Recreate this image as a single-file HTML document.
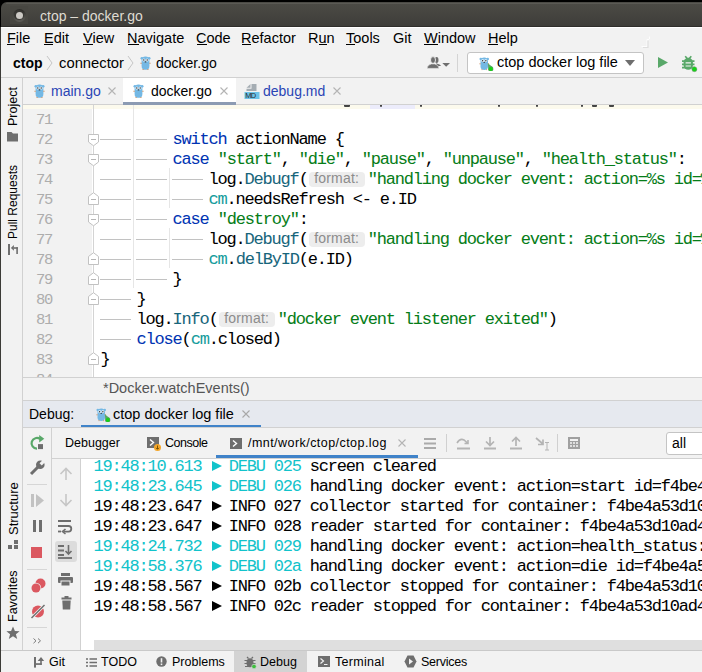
<!DOCTYPE html>
<html><head><meta charset="utf-8">
<style>
*{margin:0;padding:0;box-sizing:border-box;font-style:normal}
html,body{width:702px;height:672px;overflow:hidden;background:#f2f2f2}
body{position:relative;font-family:"Liberation Sans",sans-serif;color:#000}
.a{position:absolute}
.t{position:absolute;white-space:pre;line-height:1}
.m{position:absolute;white-space:pre;font-family:"Liberation Mono",monospace;font-size:17px;letter-spacing:-1.2px;margin-left:0.6px;line-height:20px;height:20px;-webkit-text-stroke:0.05px currentColor}
.vt{position:absolute;white-space:pre;line-height:1;transform-origin:0 0;transform:rotate(-90deg)}
svg{position:absolute;overflow:visible}
.k{color:#0033b3}.s{color:#067d17}.f{color:#17657b}.r{color:#139b9b}
.ws{display:inline-block;position:relative;width:36px;height:20px;vertical-align:top}
.ws:before{content:"";position:absolute;left:-0.6px;top:9px;width:31px;height:1px;background:#c2c2c2}
.hint{display:inline-block;position:relative;width:60px;height:20px;vertical-align:top}
.hint b{position:absolute;left:1.5px;top:1.5px;width:56px;height:15px;border-radius:4px;background:#ededed;font-weight:normal;font-family:"Liberation Sans",sans-serif;font-size:14px;line-height:13px;-webkit-text-stroke:0;color:#8c8c8c;padding-left:5px;letter-spacing:0.2px}

</style></head><body>
<style>.tri{display:inline-block;width:9px;height:20px;vertical-align:top;position:relative}
.tri:before{content:"";position:absolute;left:1px;top:4px;border-left:10px solid;border-left-color:inherit;border-top:5px solid transparent;border-bottom:5px solid transparent}
</style>

<svg width="0" height="0" style="position:absolute">
<defs>
<symbol id="gopher" viewBox="0 0 11 14">
<circle cx="1.9" cy="2.3" r="1.4" fill="#74b8e4"/><circle cx="9.1" cy="2.3" r="1.4" fill="#74b8e4"/>
<rect x="1.6" y="0.6" width="7.8" height="13.2" rx="3.9" fill="#74b8e4"/>
<circle cx="3.9" cy="4.1" r="1.5" fill="#eef6fc"/><circle cx="7.1" cy="4.1" r="1.5" fill="#eef6fc"/>
<circle cx="3.8" cy="4.1" r="0.75" fill="#333"/><circle cx="7.2" cy="4.1" r="0.75" fill="#333"/>
<ellipse cx="5.5" cy="5.9" rx="0.9" ry="0.6" fill="#444"/>
<rect x="0.5" y="6.7" width="1.2" height="1.2" fill="#d09a70"/><rect x="9.3" y="6.7" width="1.2" height="1.2" fill="#d09a70"/>
<rect x="2.5" y="13" width="1.2" height="1" fill="#d09a70"/><rect x="7.3" y="13" width="1.2" height="1" fill="#d09a70"/>
</symbol>
<symbol id="gdot" viewBox="0 0 16 16">
<use href="#gopher" x="0" y="1.5" width="10.5" height="14"/>
<path d="M8.8 8.2 L14.2 12.6 L9.4 15.6Z" fill="#59a869"/>
<circle cx="11.8" cy="14" r="2.4" fill="#14d414" stroke="#8a7a9a" stroke-width="0.4"/>
</symbol>
</defs></svg>

<!-- title bar -->
<div class="a" style="left:0;top:0;width:702px;height:28px;background:#000"></div>
<div class="a" style="left:1px;top:2px;width:701px;height:25px;background:linear-gradient(#4b4a45,#4b4a45 8%,#403f3b 85%,#3d3c38);border-radius:6px 0 0 0"></div><div class="a" style="left:6px;top:3px;width:696px;height:1px;background:#5a5954"></div>
<div class="a" style="left:1px;top:26px;width:701px;height:1px;background:#2f2e2b"></div>
<div class="a" style="left:10px;top:6px;width:18px;height:18px;background:#474641"></div><div class="a" style="left:12.8px;top:8.9px;width:13px;height:13px;border-radius:50%;background:linear-gradient(#2c2b28,#5e5d58)"></div><div class="a" style="left:14.3px;top:10.2px;width:10px;height:10px;border-radius:50%;background:#383733"></div>
<div class="a" style="left:15.8px;top:11.9px;width:7px;height:7px;border-radius:50%;background:#cdcac5"></div>
<div class="t" style="left:40px;top:9px;font-size:14px;color:#dfdbd2">ctop – docker.go</div>

<!-- window left border -->
<div class="a" style="left:0;top:27px;width:1px;height:645px;background:#3c3b37"></div>

<!-- menu bar -->
<div class="a" style="left:1px;top:27px;width:701px;height:1px;background:#ffffff"></div>
<div class="t" style="left:7px;top:31px;font-size:14.5px">File</div>
<div class="t" style="left:44px;top:31px;font-size:14.5px">Edit</div>
<div class="t" style="left:83px;top:31px;font-size:14.5px">View</div>
<div class="t" style="left:127px;top:31px;font-size:14.5px">Navigate</div>
<div class="t" style="left:196px;top:31px;font-size:14.5px">Code</div>
<div class="t" style="left:241px;top:31px;font-size:14.5px">Refactor</div>
<div class="t" style="left:308px;top:31px;font-size:14.5px">Run</div>
<div class="t" style="left:346px;top:31px;font-size:14.5px">Tools</div>
<div class="t" style="left:393px;top:31px;font-size:14.5px">Git</div>
<div class="t" style="left:424px;top:31px;font-size:14.5px">Window</div>
<div class="t" style="left:488px;top:31px;font-size:14.5px">Help</div>
<!-- underlines -->
<div class="a" style="left:7px;top:44px;width:8px;height:1px;background:#000"></div>
<div class="a" style="left:44px;top:44px;width:9px;height:1px;background:#000"></div>
<div class="a" style="left:83px;top:44px;width:10px;height:1px;background:#000"></div>
<div class="a" style="left:128px;top:44px;width:11px;height:1px;background:#000"></div>
<div class="a" style="left:197px;top:44px;width:10px;height:1px;background:#000"></div>
<div class="a" style="left:242px;top:44px;width:9px;height:1px;background:#000"></div>
<div class="a" style="left:319px;top:44px;width:8px;height:1px;background:#000"></div>
<div class="a" style="left:346px;top:44px;width:9px;height:1px;background:#000"></div>
<div class="a" style="left:424px;top:44px;width:14px;height:1px;background:#000"></div>
<div class="a" style="left:488px;top:44px;width:10px;height:1px;background:#000"></div>
<!-- small artifact near menubar right -->
<svg style="left:640px;top:35px" width="12" height="14"><path d="M9.5 4 V1.5 M7 4.5 H9 M7 4.5 V11.5 H1.5" fill="none" stroke="#fdfdfd" stroke-width="1"/><path d="M8 5.5 V12.5 H3" fill="none" stroke="#dedede" stroke-width="1.2"/></svg>

<!-- nav bar -->
<div class="t" style="left:13px;top:56px;font-size:14px;font-weight:bold">ctop</div>
<svg style="left:46px;top:55px" width="8" height="20"><path d="M1 1 L6 8 L1 15" fill="none" stroke="#c6c6c6" stroke-width="1"/></svg>
<div class="t" style="left:59px;top:56px;font-size:14.8px">connector</div>
<svg style="left:127px;top:55px" width="8" height="20"><path d="M1 1 L6 8 L1 15" fill="none" stroke="#c6c6c6" stroke-width="1"/></svg>
<svg style="left:139.5px;top:56px" width="11" height="14"><use href="#gopher" width="11" height="14"/></svg>
<div class="t" style="left:156px;top:56px;font-size:14px">docker.go</div>

<svg style="left:426px;top:56px" width="26" height="16"><ellipse cx="10.6" cy="3.9" rx="1.9" ry="3" fill="#6e6e6e"/><path d="M10 7.2 L13.5 8.6 Q15 9.3 14.8 10 L11 10Z" fill="#6e6e6e"/><ellipse cx="7" cy="4" rx="2.5" ry="3.4" fill="#6e6e6e" stroke="#f2f2f2" stroke-width="0.9"/><path d="M1 12.4 Q1.3 8.8 5.3 7.9 H8.7 Q12.7 8.8 13 12.4Z" fill="#6e6e6e" stroke="#f2f2f2" stroke-width="0.6"/><path d="M16.3 7 H24 L20.15 10.8Z" fill="#6e6e6e"/></svg>
<div class="a" style="left:457px;top:54px;width:1px;height:18px;background:#d4d4d4"></div>
<div class="a" style="left:467px;top:52px;width:177px;height:22px;background:#fff;border:1px solid #c4c4c4;border-radius:3px"></div>
<svg style="left:479px;top:55px" width="16" height="16"><use href="#gdot" width="16" height="16"/></svg>
<div class="t" style="left:497px;top:55px;font-size:14.5px">ctop docker log file</div>
<svg style="left:625px;top:60px" width="10" height="7"><path d="M0 0 L10 0 L5 6Z" fill="#6e6e6e"/></svg>
<svg style="left:658px;top:57px" width="11" height="12"><path d="M0 0 L10 5.5 L0 11Z" fill="#59a869"/></svg>
<svg style="left:681px;top:55px" width="18" height="18"><path d="M4.2 1.2 L6.2 3.6 M10.3 1.2 L8.3 3.6" stroke="#59a869" stroke-width="1.6"/><rect x="2.6" y="2.8" width="9.3" height="12" rx="4.6" fill="#59a869"/><path d="M1 6.2 H13.5 M1 9.4 H13.5 M1 12.6 H13.5" stroke="#59a869" stroke-width="1.7"/><path d="M4.6 7.8 H9.9 M4.6 11 H9.9" stroke="#f2f2f2" stroke-width="1.2"/><circle cx="13.4" cy="14.2" r="2.5" fill="#14d414" stroke="#8a8a8a" stroke-width="0.5"/></svg>

<!-- nav bar border -->
<div class="a" style="left:1px;top:77px;width:701px;height:1px;background:#d1d1d1"></div>


<div class="a" style="left:22px;top:78px;width:1px;height:573px;background:#d1d1d1"></div>

<!-- left strip labels -->
<div class="vt" style="left:7px;top:126px;font-size:12.5px">Project</div>
<svg style="left:7px;top:132px" width="12" height="10"><path d="M0 0 H4.5 L6 1.5 H11 V9.5 H0Z" fill="#6e6e6e"/></svg>
<div class="vt" style="left:7px;top:239px;font-size:12px">Pull Requests</div>
<svg style="left:8px;top:244px" width="11" height="11"><rect x="0" y="0" width="2" height="11" fill="#6e6e6e"/><path d="M2.9 3.9 L5.9 1 L5.9 6.8Z" fill="#6e6e6e"/><rect x="5.8" y="3.2" width="4.1" height="1.6" fill="#6e6e6e"/><rect x="8.3" y="3.2" width="1.6" height="6.8" fill="#6e6e6e"/></svg>
<div class="vt" style="left:7px;top:535px;font-size:13px">Structure</div>
<svg style="left:8px;top:540px" width="11" height="10"><rect x="0" y="5" width="4" height="4" fill="#6e6e6e"/><rect x="6" y="5" width="4" height="4" fill="#6e6e6e"/><rect x="6" y="0" width="4" height="4" fill="#6e6e6e"/></svg>
<div class="vt" style="left:7px;top:622px;font-size:12.5px">Favorites</div>
<svg style="left:6px;top:626px" width="14" height="14"><path d="M7 0.5 L8.9 5 L13.6 5.2 L9.9 8.2 L11.2 13 L7 10.3 L2.8 13 L4.1 8.2 L0.4 5.2 L5.1 5Z" fill="#6e6e6e"/></svg>

<!-- tabs -->
<div class="a" style="left:123px;top:78px;width:113px;height:26px;background:#fff"></div>
<div class="a" style="left:23px;top:104px;width:679px;height:1px;background:#d1d1d1"></div>
<div class="a" style="left:123px;top:102px;width:113px;height:3px;background:#8c9bb3"></div>
<svg style="left:34px;top:84px" width="11" height="14"><use href="#gopher" width="11" height="14"/></svg>
<div class="t" style="left:51px;top:83.5px;font-size:14px;color:#2a45b5">main.go</div>
<svg style="left:108px;top:87px" width="8" height="8"><path d="M0.5 0.5 L7.5 7.5 M7.5 0.5 L0.5 7.5" stroke="#b4b4b4" stroke-width="1.1"/></svg>
<svg style="left:133px;top:84px" width="11" height="14"><use href="#gopher" width="11" height="14"/></svg>
<div class="t" style="left:151px;top:83.5px;font-size:14px;color:#000">docker.go</div>
<svg style="left:220px;top:87px" width="8" height="8"><path d="M0.5 0.5 L7.5 7.5 M7.5 0.5 L0.5 7.5" stroke="#b4b4b4" stroke-width="1.1"/></svg>
<svg style="left:243.5px;top:84px" width="16" height="15"><path d="M2.5 3.8 L6.5 0 V3.8Z" fill="#a5adb3"/><path d="M7.5 0 H12.5 V7 H2.5 V4.8 H7.5Z" fill="#a5adb3"/><rect x="0.5" y="8" width="15" height="7" fill="#6cc3e8"/><text x="1.2" y="14.3" font-family="Liberation Sans" font-size="7.5" fill="#2b2b2b" textLength="11">MD</text></svg>
<div class="t" style="left:263px;top:83.5px;font-size:14px;color:#2a45b5">debug.md</div>
<svg style="left:333px;top:87px" width="8" height="8"><path d="M0.5 0.5 L7.5 7.5 M7.5 0.5 L0.5 7.5" stroke="#b4b4b4" stroke-width="1.1"/></svg>

<div class="a" style="left:92px;top:105px;width:610px;height:272px;background:#fff"></div>
<div class="a" style="left:23px;top:105px;width:679px;height:4px;background:#fcfaed"></div>
<div class="a" style="left:370px;top:105px;width:45px;height:4px;background:#ececfb"></div>
<div class="a" style="left:93px;top:105px;width:1px;height:272px;background:#d4d4d4"></div>
<div class="a" style="left:344px;top:105px;width:6px;height:2px;background:#444;border-radius:0 0 1px 1px"></div>
<div class="a" style="left:380px;top:105px;width:2px;height:2px;background:#444;border-radius:0 0 1px 1px"></div>
<div class="a" style="left:420px;top:105px;width:2px;height:1.5px;background:#444;border-radius:0 0 1px 1px"></div>
<div class="a" style="left:498px;top:105px;width:2px;height:1.5px;background:#444;border-radius:0 0 1px 1px"></div>
<div class="a" style="left:536px;top:105px;width:2px;height:1.5px;background:#444;border-radius:0 0 1px 1px"></div>
<div class="a" style="left:581px;top:105px;width:2px;height:1.5px;background:#444;border-radius:0 0 1px 1px"></div>
<div class="a" style="left:592px;top:105px;width:5px;height:2px;background:#444;border-radius:0 0 1px 1px"></div>
<div class="a" style="left:609px;top:105px;width:5px;height:2px;background:#444;border-radius:0 0 1px 1px"></div>
<div class="a" style="left:133px;top:105px;width:1px;height:183px;background:#e6e6e6"></div>
<div class="a" style="left:169px;top:168px;width:1px;height:40px;background:#e6e6e6"></div>
<div class="a" style="left:169px;top:228px;width:1px;height:40px;background:#e6e6e6"></div>
<div class="m" style="left:35.5px;top:110px;color:#adadad;-webkit-text-stroke:0;font-size:15.5px;letter-spacing:-1.4px">71</div>
<div class="m" style="left:100px;top:110px"></div>
<div class="m" style="left:35.5px;top:130px;color:#adadad;-webkit-text-stroke:0;font-size:15.5px;letter-spacing:-1.4px">72</div>
<div class="m" style="left:100px;top:130px"><i class="ws"></i><i class="ws"></i><span class="k">switch</span> actionName {</div>
<div class="m" style="left:35.5px;top:150px;color:#adadad;-webkit-text-stroke:0;font-size:15.5px;letter-spacing:-1.4px">73</div>
<div class="m" style="left:100px;top:150px"><i class="ws"></i><i class="ws"></i><span class="k">case</span> <span class="s">"start"</span>, <span class="s">"die"</span>, <span class="s">"pause"</span>, <span class="s">"unpause"</span>, <span class="s">"health_status"</span>:</div>
<div class="m" style="left:35.5px;top:170px;color:#adadad;-webkit-text-stroke:0;font-size:15.5px;letter-spacing:-1.4px">74</div>
<div class="m" style="left:100px;top:170px"><i class="ws"></i><i class="ws"></i><i class="ws"></i>log.<span class="f">Debugf</span>(<i class="hint"><b>format:</b></i><span class="s">"handling docker event: action=%s id=%s"</span>, e.Status, e.ID)</div>
<div class="m" style="left:35.5px;top:190px;color:#adadad;-webkit-text-stroke:0;font-size:15.5px;letter-spacing:-1.4px">75</div>
<div class="m" style="left:100px;top:190px"><i class="ws"></i><i class="ws"></i><i class="ws"></i><span class="r">cm</span>.needsRefresh &lt;- e.ID</div>
<div class="m" style="left:35.5px;top:210px;color:#adadad;-webkit-text-stroke:0;font-size:15.5px;letter-spacing:-1.4px">76</div>
<div class="m" style="left:100px;top:210px"><i class="ws"></i><i class="ws"></i><span class="k">case</span> <span class="s">"destroy"</span>:</div>
<div class="m" style="left:35.5px;top:230px;color:#adadad;-webkit-text-stroke:0;font-size:15.5px;letter-spacing:-1.4px">77</div>
<div class="m" style="left:100px;top:230px"><i class="ws"></i><i class="ws"></i><i class="ws"></i>log.<span class="f">Debugf</span>(<i class="hint"><b>format:</b></i><span class="s">"handling docker event: action=%s id=%s"</span>, e.Status, e.ID)</div>
<div class="m" style="left:35.5px;top:250px;color:#adadad;-webkit-text-stroke:0;font-size:15.5px;letter-spacing:-1.4px">78</div>
<div class="m" style="left:100px;top:250px"><i class="ws"></i><i class="ws"></i><i class="ws"></i><span class="r">cm</span>.<span class="f">delByID</span>(e.ID)</div>
<div class="m" style="left:35.5px;top:270px;color:#adadad;-webkit-text-stroke:0;font-size:15.5px;letter-spacing:-1.4px">79</div>
<div class="m" style="left:100px;top:270px"><i class="ws"></i><i class="ws"></i>}</div>
<div class="m" style="left:35.5px;top:290px;color:#adadad;-webkit-text-stroke:0;font-size:15.5px;letter-spacing:-1.4px">80</div>
<div class="m" style="left:100px;top:290px"><i class="ws"></i>}</div>
<div class="m" style="left:35.5px;top:310px;color:#adadad;-webkit-text-stroke:0;font-size:15.5px;letter-spacing:-1.4px">81</div>
<div class="m" style="left:100px;top:310px"><i class="ws"></i>log.<span class="f">Info</span>(<i class="hint"><b>format:</b></i><span class="s">"docker event listener exited"</span>)</div>
<div class="m" style="left:35.5px;top:330px;color:#adadad;-webkit-text-stroke:0;font-size:15.5px;letter-spacing:-1.4px">82</div>
<div class="m" style="left:100px;top:330px"><i class="ws"></i><span class="k">close</span>(<span class="r">cm</span>.closed)</div>
<div class="m" style="left:35.5px;top:350px;color:#adadad;-webkit-text-stroke:0;font-size:15.5px;letter-spacing:-1.4px">83</div>
<div class="m" style="left:100px;top:350px">}</div>
<div class="m" style="left:35.5px;top:370px;color:#adadad;-webkit-text-stroke:0;font-size:15.5px;letter-spacing:-1.4px">84</div>
<svg style="left:0;top:0" width="702" height="672"><path d="M88.5 134.5 H98.5 V142.0 L93.5 145.8 L88.5 142.0 Z" fill="#fff" stroke="#c2c2c2" stroke-width="1"/><path d="M91 139.5 H96" stroke="#b5b5b5" stroke-width="1"/><path d="M88.5 154.5 H98.5 V162.0 L93.5 165.8 L88.5 162.0 Z" fill="#fff" stroke="#c2c2c2" stroke-width="1"/><path d="M91 159.5 H96" stroke="#b5b5b5" stroke-width="1"/><path d="M88.5 204.5 H98.5 V196.5 L93.5 192.7 L88.5 196.5 Z" fill="#fff" stroke="#c2c2c2" stroke-width="1"/><path d="M91 199.5 H96" stroke="#b5b5b5" stroke-width="1"/><path d="M88.5 214.5 H98.5 V222.0 L93.5 225.8 L88.5 222.0 Z" fill="#fff" stroke="#c2c2c2" stroke-width="1"/><path d="M91 219.5 H96" stroke="#b5b5b5" stroke-width="1"/><path d="M88.5 264.5 H98.5 V256.5 L93.5 252.7 L88.5 256.5 Z" fill="#fff" stroke="#c2c2c2" stroke-width="1"/><path d="M91 259.5 H96" stroke="#b5b5b5" stroke-width="1"/><path d="M88.5 284.5 H98.5 V276.5 L93.5 272.7 L88.5 276.5 Z" fill="#fff" stroke="#c2c2c2" stroke-width="1"/><path d="M91 279.5 H96" stroke="#b5b5b5" stroke-width="1"/><path d="M88.5 304.5 H98.5 V296.5 L93.5 292.7 L88.5 296.5 Z" fill="#fff" stroke="#c2c2c2" stroke-width="1"/><path d="M91 299.5 H96" stroke="#b5b5b5" stroke-width="1"/><path d="M88.5 364.5 H98.5 V356.5 L93.5 352.7 L88.5 356.5 Z" fill="#fff" stroke="#c2c2c2" stroke-width="1"/><path d="M91 359.5 H96" stroke="#b5b5b5" stroke-width="1"/></svg>
<div class="a" style="left:23px;top:377px;width:679px;height:1px;background:#d1d1d1"></div>
<div class="a" style="left:23px;top:378px;width:679px;height:22px;background:#f2f2f2"></div>
<div class="t" style="left:103px;top:381px;font-size:14.5px;color:#555">*Docker.watchEvents()</div>
<div class="a" style="left:23px;top:400px;width:679px;height:1px;background:#d1d1d1"></div>
<!-- debug header -->
<div class="a" style="left:23px;top:401px;width:679px;height:27px;background:#e6e9ef"></div>
<div class="t" style="left:29px;top:407px;font-size:14px">Debug:</div>
<svg style="left:96px;top:405.5px" width="16" height="16"><use href="#gdot" width="16" height="16"/></svg>
<div class="t" style="left:113px;top:406.5px;font-size:14.5px">ctop docker log file</div>
<svg style="left:242px;top:410px" width="8" height="8"><path d="M0.5 0.5 L7.5 7.5 M7.5 0.5 L0.5 7.5" stroke="#a8a8a8" stroke-width="1.1"/></svg>
<div class="a" style="left:81px;top:425px;width:180px;height:3px;background:#4083c9"></div>
<div class="a" style="left:23px;top:427px;width:679px;height:1px;background:#d1d1d1"></div>

<!-- debug tabs toolbar -->
<div class="t" style="left:65px;top:437px;font-size:12.5px">Debugger</div>
<svg style="left:147px;top:437px" width="14" height="14"><rect x="0" y="0" width="12" height="11" fill="#6e6e6e"/><path d="M3 2.5 L6.5 5.5 L3 8.5" fill="none" stroke="#fff" stroke-width="1.4"/><circle cx="10.5" cy="10.5" r="3.5" fill="#f4a62a"/><path d="M10.5 8.5 V12 M9 10.8 L10.5 12.3 L12 10.8" fill="none" stroke="#6b4a00" stroke-width="0.9"/></svg>
<div class="t" style="left:165px;top:437px;font-size:12.5px;letter-spacing:-0.5px">Console</div>
<svg style="left:230px;top:438px" width="12" height="11"><rect x="0" y="0" width="12" height="11" fill="#6e6e6e"/><path d="M3 2.5 L6.5 5.5 L3 8.5" fill="none" stroke="#fff" stroke-width="1.4"/></svg>
<div class="t" style="left:248px;top:437px;font-size:12.5px;letter-spacing:0.45px">/mnt/work/ctop/ctop.log</div>
<svg style="left:398px;top:439px" width="8" height="8"><path d="M0.5 0.5 L7.5 7.5 M7.5 0.5 L0.5 7.5" stroke="#b4b4b4" stroke-width="1.1"/></svg>
<div class="a" style="left:216px;top:455px;width:202px;height:3px;background:#4083c9"></div>
<svg style="left:424px;top:438px" width="12" height="11"><path d="M0 1 H12 M0 5.5 H12 M0 10 H12" stroke="#aaa" stroke-width="2"/></svg>
<div class="a" style="left:446px;top:434px;width:1px;height:18px;background:#d0d0d0"></div>
<svg style="left:456px;top:437px" width="15" height="13"><path d="M1 6 Q4 1 8 3 L12 6.5 M12 3 V6.5 H8.5" fill="none" stroke="#b4b4b4" stroke-width="1.6"/><path d="M1 11.5 H14" stroke="#b4b4b4" stroke-width="2"/></svg>
<svg style="left:483px;top:437px" width="14" height="13"><path d="M7 0 V8 M3 4.5 L7 8.5 L11 4.5" fill="none" stroke="#b4b4b4" stroke-width="1.7"/><path d="M1 11.5 H13" stroke="#b4b4b4" stroke-width="2"/></svg>
<svg style="left:509px;top:437px" width="14" height="13"><path d="M7 9 V1 M3 4.5 L7 0.5 L11 4.5" fill="none" stroke="#b4b4b4" stroke-width="1.7"/><path d="M1 11.5 H13" stroke="#b4b4b4" stroke-width="2"/></svg>
<svg style="left:535px;top:437px" width="15" height="14"><path d="M1 1 L8 7 M8 2.5 V7.5 H3" fill="none" stroke="#b4b4b4" stroke-width="1.7"/><path d="M10 5.5 H14 M12 5.5 V13 M10 13 H14" fill="none" stroke="#b4b4b4" stroke-width="1"/></svg>
<div class="a" style="left:557px;top:434px;width:1px;height:18px;background:#d0d0d0"></div>
<svg style="left:568px;top:437px" width="13" height="13"><rect x="0" y="0" width="12" height="12" fill="#a0a0a0"/><rect x="2" y="2" width="8" height="2" fill="#f2f2f2"/><path d="M2 6 H4 M5 6 H7 M8 6 H10 M2 9 H4 M5 9 H7 M8 9 H10" stroke="#f2f2f2" stroke-width="1.5"/></svg>
<div class="a" style="left:666px;top:432px;width:50px;height:23px;background:#fff;border:1px solid #c4c4c4;border-radius:3px"></div>
<div class="t" style="left:672px;top:436px;font-size:14px">all</div>
<div class="a" style="left:52px;top:458px;width:650px;height:1px;background:#d1d1d1"></div>

<!-- left debug toolbar -->
<div class="a" style="left:51px;top:428px;width:1px;height:223px;background:#d1d1d1"></div>
<svg style="left:26px;top:432px" width="24" height="48"><path d="M14.2 7.2 A5.3 5.3 0 1 0 11 16.6" fill="none" stroke="#59a869" stroke-width="2.2"/><path d="M18.3 6.8 L13.2 2.9 L13.2 10.6Z" fill="#59a869"/><rect x="12" y="12.1" width="5" height="5" fill="#6e6e6e"/></svg>
<svg style="left:26px;top:432px" width="24" height="48"><path d="M5 42 L12.5 34.5" stroke="#6e6e6e" stroke-width="3"/><circle cx="14.3" cy="32.8" r="4.3" fill="#6e6e6e"/><rect x="-1.6" y="-3.2" width="3.2" height="6" fill="#f2f2f2" transform="translate(16.6 30.4) rotate(45)"/></svg>
<div class="a" style="left:27px;top:484px;width:20px;height:1px;background:#d6d6d6"></div>
<svg style="left:31px;top:494px" width="14" height="13"><rect x="0" y="0" width="3" height="13" fill="#c2c2c2"/><path d="M5 0 L13 6.5 L5 13Z" fill="#c2c2c2"/></svg>
<svg style="left:32px;top:520px" width="12" height="12"><rect x="1" y="0" width="3" height="12" fill="#6e6e6e"/><rect x="7" y="0" width="3" height="12" fill="#6e6e6e"/></svg>
<svg style="left:31px;top:547px" width="12" height="12"><rect x="0" y="0" width="11" height="11" fill="#db5860"/></svg>
<div class="a" style="left:27px;top:569px;width:20px;height:1px;background:#d6d6d6"></div>
<svg style="left:30px;top:578px" width="16" height="16"><circle cx="10.5" cy="5.5" r="5" fill="#db5860"/><circle cx="6" cy="10" r="5.2" fill="#f2f2f2"/><circle cx="6" cy="10" r="4.5" fill="#db5860"/></svg>
<svg style="left:30px;top:604px" width="16" height="15"><circle cx="8" cy="7.5" r="6" fill="#db5860"/><path d="M1.5 14 L14.5 1" stroke="#f2f2f2" stroke-width="3"/><path d="M1.5 14 L14.5 1" stroke="#6e6e6e" stroke-width="1.4"/></svg>
<div class="a" style="left:27px;top:627px;width:20px;height:1px;background:#d6d6d6"></div>
<svg style="left:33px;top:638px" width="9" height="6"><path d="M0.5 0.5 L3 2.8 L0.5 5.2 M5 0.5 L7.5 2.8 L5 5.2" fill="none" stroke="#7a7a7a" stroke-width="1"/></svg>

<!-- second toolbar -->
<div class="a" style="left:80px;top:459px;width:1px;height:192px;background:#d1d1d1"></div>
<svg style="left:59px;top:467px" width="14" height="14"><path d="M7 13 V1.5 M1.5 7 L7 1.5 L12.5 7" fill="none" stroke="#c6c6c6" stroke-width="1.6"/></svg>
<svg style="left:59px;top:493px" width="14" height="14"><path d="M7 1 V12.5 M1.5 7 L7 12.5 L12.5 7" fill="none" stroke="#c6c6c6" stroke-width="1.6"/></svg>
<div class="a" style="left:55px;top:541px;width:22px;height:21px;background:#dcdcdc;border-radius:3px"></div>
<svg style="left:58px;top:520px" width="15" height="14"><path d="M0 1 H13 M0 6 H10.5 A2.8 2.8 0 0 1 10.5 11.6 H6" fill="none" stroke="#6e6e6e" stroke-width="1.8"/><path d="M7.5 9 L4.5 11.6 L7.5 14" fill="none" stroke="#6e6e6e" stroke-width="1.6"/><path d="M0 11.5 H3" stroke="#6e6e6e" stroke-width="1.8"/></svg>
<svg style="left:58px;top:545px" width="15" height="14"><path d="M0 1 H6 M0 5.5 H6 M0 10 H6" stroke="#6e6e6e" stroke-width="1.8"/><path d="M10.5 0 V9 M7.5 6 L10.5 9 L13.5 6" fill="none" stroke="#6e6e6e" stroke-width="1.6"/><path d="M0 13 H14" stroke="#6e6e6e" stroke-width="1.8"/></svg>
<svg style="left:58px;top:573px" width="15" height="13"><rect x="3" y="0" width="9" height="3" fill="#6e6e6e"/><rect x="0" y="4" width="15" height="6" rx="1" fill="#6e6e6e"/><rect x="3" y="8" width="9" height="5" fill="#6e6e6e" stroke="#f2f2f2" stroke-width="1"/></svg>
<svg style="left:61px;top:596px" width="11" height="14"><rect x="0.5" y="1.5" width="10" height="2" fill="#6e6e6e"/><rect x="3.5" y="0" width="4" height="2" fill="#6e6e6e"/><path d="M1.3 4.5 H9.7 L9.2 13.6 H1.8Z" fill="#6e6e6e"/></svg>

<!-- console -->
<div class="a" style="left:81px;top:459px;width:621px;height:191px;background:#fff"></div>
<div class="m" style="left:93px;top:457px"><span style="color:#12c3cb">19:48:10.613 <i class="tri" style="border-left-color:#12c3cb"></i> DEBU 025</span> screen cleared</div>
<div class="m" style="left:93px;top:477px"><span style="color:#12c3cb">19:48:23.645 <i class="tri" style="border-left-color:#12c3cb"></i> DEBU 026</span> handling docker event: action=start id=f4be4a53d10ad4</div>
<div class="m" style="left:93px;top:497px"><span style="color:#000">19:48:23.647 <i class="tri" style="border-left-color:#000"></i> INFO 027</span> collector started for container: f4be4a53d10ad4</div>
<div class="m" style="left:93px;top:517px"><span style="color:#000">19:48:23.647 <i class="tri" style="border-left-color:#000"></i> INFO 028</span> reader started for container: f4be4a53d10ad4</div>
<div class="m" style="left:93px;top:537px"><span style="color:#12c3cb">19:48:24.732 <i class="tri" style="border-left-color:#12c3cb"></i> DEBU 029</span> handling docker event: action=health_status: healthy</div>
<div class="m" style="left:93px;top:557px"><span style="color:#12c3cb">19:48:58.376 <i class="tri" style="border-left-color:#12c3cb"></i> DEBU 02a</span> handling docker event: action=die id=f4be4a53d10ad4</div>
<div class="m" style="left:93px;top:577px"><span style="color:#000">19:48:58.567 <i class="tri" style="border-left-color:#000"></i> INFO 02b</span> collector stopped for container: f4be4a53d10ad4</div>
<div class="m" style="left:93px;top:597px"><span style="color:#000">19:48:58.567 <i class="tri" style="border-left-color:#000"></i> INFO 02c</span> reader stopped for container: f4be4a53d10ad4</div>
<div class="a" style="left:94px;top:640px;width:608px;height:10px;background:#dfdfdf"></div>
<!-- bottom bar -->
<div class="a" style="left:1px;top:650px;width:701px;height:1px;background:#c9c9c9"></div>
<div class="a" style="left:234px;top:651px;width:73px;height:21px;background:#d3d3d3"></div>
<svg style="left:33px;top:656px" width="12" height="13"><rect x="1" y="1" width="2" height="10.6" fill="#6e6e6e"/><rect x="3" y="7.2" width="5.7" height="1.7" fill="#6e6e6e"/><rect x="7.2" y="4.4" width="1.6" height="4.5" fill="#6e6e6e"/><path d="M4.7 4.9 L8 1.1 L11.2 4.9Z" fill="#6e6e6e"/></svg>
<div class="t" style="left:49px;top:656px;font-size:12.5px">Git</div>
<svg style="left:86px;top:658px" width="11" height="9"><path d="M0 1 H2 M0 4.5 H2 M0 8 H2 M3.5 1 H11 M3.5 4.5 H11 M3.5 8 H11" stroke="#6e6e6e" stroke-width="1.6"/></svg>
<div class="t" style="left:101px;top:656px;font-size:12.5px">TODO</div>
<svg style="left:156px;top:656px" width="11" height="11"><circle cx="5.5" cy="5.5" r="5.2" fill="#6e6e6e"/><rect x="4.7" y="2.2" width="1.6" height="4.3" fill="#f2f2f2"/><rect x="4.7" y="7.5" width="1.6" height="1.6" fill="#f2f2f2"/></svg>
<div class="t" style="left:172px;top:656px;font-size:12.5px">Problems</div>
<svg style="left:244px;top:656px" width="13" height="13"><path d="M3 1 L4.5 2.5 M9 1 L7.5 2.5" stroke="#6e6e6e" stroke-width="1.2"/><ellipse cx="6" cy="6.8" rx="3.5" ry="4.5" fill="#6e6e6e"/><path d="M0.5 4.5 H11.5 M0.5 7.5 H11.5 M1 10.5 H11" stroke="#6e6e6e" stroke-width="1.2"/><circle cx="10" cy="10.5" r="2.3" fill="#3fbf3f" stroke="#d3d3d3" stroke-width="0.7"/></svg>
<div class="t" style="left:260px;top:656px;font-size:12.5px">Debug</div>
<svg style="left:318px;top:656px" width="12" height="11"><rect x="0" y="0" width="12" height="11" fill="#6e6e6e"/><path d="M2.5 2.5 L5.5 5 L2.5 7.5 M6 8.5 H9.5" fill="none" stroke="#f2f2f2" stroke-width="1.2"/></svg>
<div class="t" style="left:335px;top:656px;font-size:12.5px;letter-spacing:0.3px">Terminal</div>
<svg style="left:404px;top:655px" width="13" height="13"><path d="M3.5 0.5 H9.5 L12.5 6.5 L9.5 12.5 H3.5 L0.5 6.5Z" fill="#6e6e6e"/><path d="M5 3.5 L9 6.5 L5 9.5Z" fill="#f2f2f2"/></svg>
<div class="t" style="left:421px;top:656px;font-size:12.5px;letter-spacing:-0.25px">Services</div>

</body></html>
